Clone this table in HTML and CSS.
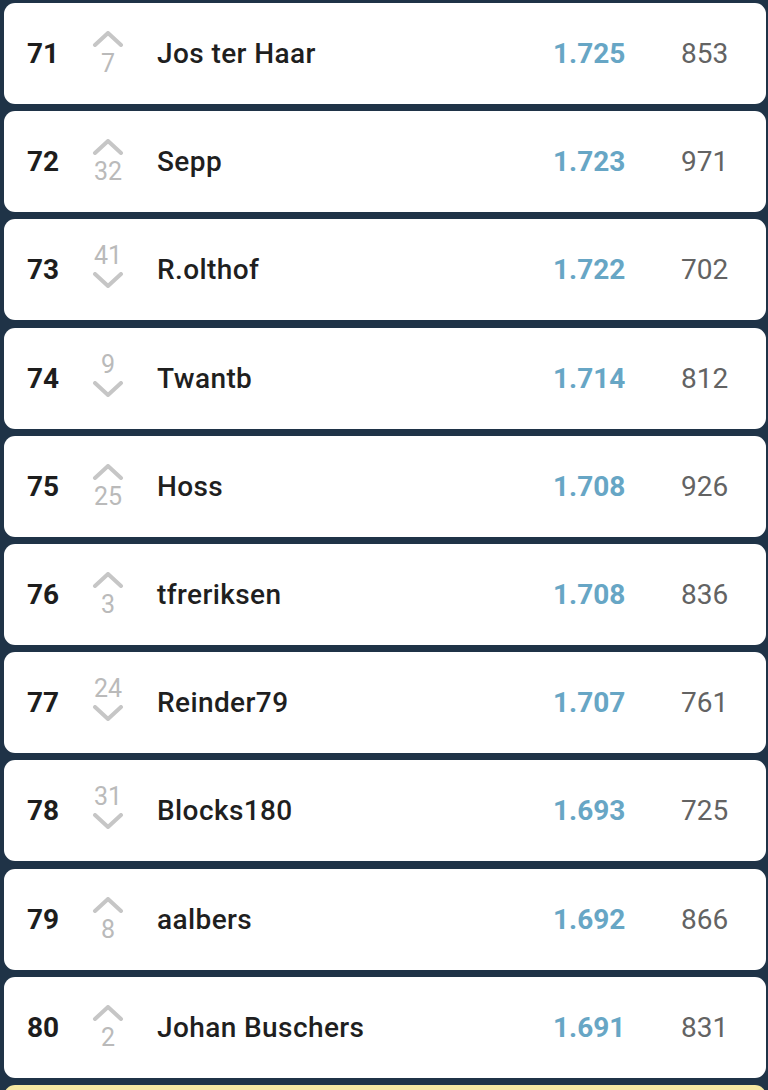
FILE: index.html
```html
<!DOCTYPE html>
<html>
<head>
<meta charset="utf-8">
<link rel="stylesheet" href="styles.css">
</head>
<body>
<div class="list">
  <div class="card"><span class="rank">71</span><span class="move up"><svg class="chev" viewBox="0 0 32 16"><path d="M3 14 L16 2 L29 14"/></svg><span class="delta">7</span></span><span class="name">Jos ter Haar</span><span class="score">1.725</span><span class="pts">853</span></div>
  <div class="card"><span class="rank">72</span><span class="move up"><svg class="chev" viewBox="0 0 32 16"><path d="M3 14 L16 2 L29 14"/></svg><span class="delta">32</span></span><span class="name">Sepp</span><span class="score">1.723</span><span class="pts">971</span></div>
  <div class="card"><span class="rank">73</span><span class="move down"><span class="delta">41</span><svg class="chev" viewBox="0 0 32 16"><path d="M3 2 L16 14 L29 2"/></svg></span><span class="name">R.olthof</span><span class="score">1.722</span><span class="pts">702</span></div>
  <div class="card"><span class="rank">74</span><span class="move down"><span class="delta">9</span><svg class="chev" viewBox="0 0 32 16"><path d="M3 2 L16 14 L29 2"/></svg></span><span class="name">Twantb</span><span class="score">1.714</span><span class="pts">812</span></div>
  <div class="card"><span class="rank">75</span><span class="move up"><svg class="chev" viewBox="0 0 32 16"><path d="M3 14 L16 2 L29 14"/></svg><span class="delta">25</span></span><span class="name">Hoss</span><span class="score">1.708</span><span class="pts">926</span></div>
  <div class="card"><span class="rank">76</span><span class="move up"><svg class="chev" viewBox="0 0 32 16"><path d="M3 14 L16 2 L29 14"/></svg><span class="delta">3</span></span><span class="name">tfreriksen</span><span class="score">1.708</span><span class="pts">836</span></div>
  <div class="card"><span class="rank">77</span><span class="move down"><span class="delta">24</span><svg class="chev" viewBox="0 0 32 16"><path d="M3 2 L16 14 L29 2"/></svg></span><span class="name">Reinder79</span><span class="score">1.707</span><span class="pts">761</span></div>
  <div class="card"><span class="rank">78</span><span class="move down"><span class="delta">31</span><svg class="chev" viewBox="0 0 32 16"><path d="M3 2 L16 14 L29 2"/></svg></span><span class="name">Blocks180</span><span class="score">1.693</span><span class="pts">725</span></div>
  <div class="card"><span class="rank">79</span><span class="move up"><svg class="chev" viewBox="0 0 32 16"><path d="M3 14 L16 2 L29 14"/></svg><span class="delta">8</span></span><span class="name">aalbers</span><span class="score">1.692</span><span class="pts">866</span></div>
  <div class="card"><span class="rank">80</span><span class="move up"><svg class="chev" viewBox="0 0 32 16"><path d="M3 14 L16 2 L29 14"/></svg><span class="delta">2</span></span><span class="name">Johan Buschers</span><span class="score">1.691</span><span class="pts">831</span></div>
  <div class="card mine"></div>
</div>
</body>
</html>
```
FILE: styles.css
```css
html, body {
  margin: 0;
  padding: 0;
}
body {
  background: #1f3347;
  font-family: Roboto, "Liberation Sans", sans-serif;
}
.list {
  display: flex;
  flex-direction: column;
  gap: 7.2px;
  padding: 3px 2px 0 4px;
  height: 1090px;
  box-sizing: border-box;
  overflow: hidden;
}
.card {
  background: #ffffff;
  border-radius: 11px;
  height: 101px;
  display: flex;
  align-items: center;
  flex-shrink: 0;
}
.card.mine {
  background: #f6e8a2;
}
.rank {
  width: 66px;
  padding-left: 23px;
  box-sizing: border-box;
  font-size: 28px;
  font-weight: 700;
  color: #1d1d1d;
}
.move {
  width: 76px;
  align-self: stretch;
  display: flex;
  flex-direction: column;
  align-items: center;
}
.move.up { padding-top: 28px; }
.move.down { padding-top: 24px; }
.move .chev {
  width: 32px;
  height: 16px;
  display: block;
}
.move .chev path {
  fill: none;
  stroke: #c6c6c6;
  stroke-width: 4;
  stroke-linecap: round;
  stroke-linejoin: round;
}
.down .chev { margin-top: 4px; }
.delta {
  font-size: 25px;
  line-height: 25px;
  color: #bababa;
}
.up .delta { margin-top: 4px; }
.name {
  flex: 1;
  margin-left: 11px;
  font-size: 28px;
  font-weight: 500;
  letter-spacing: 0.4px;
  color: #1f1f1f;
}
.score {
  width: 128px;
  font-size: 28px;
  font-weight: 700;
  color: #67a6c5;
}
.pts {
  width: 85px;
  font-size: 28px;
  color: #636363;
}
```
